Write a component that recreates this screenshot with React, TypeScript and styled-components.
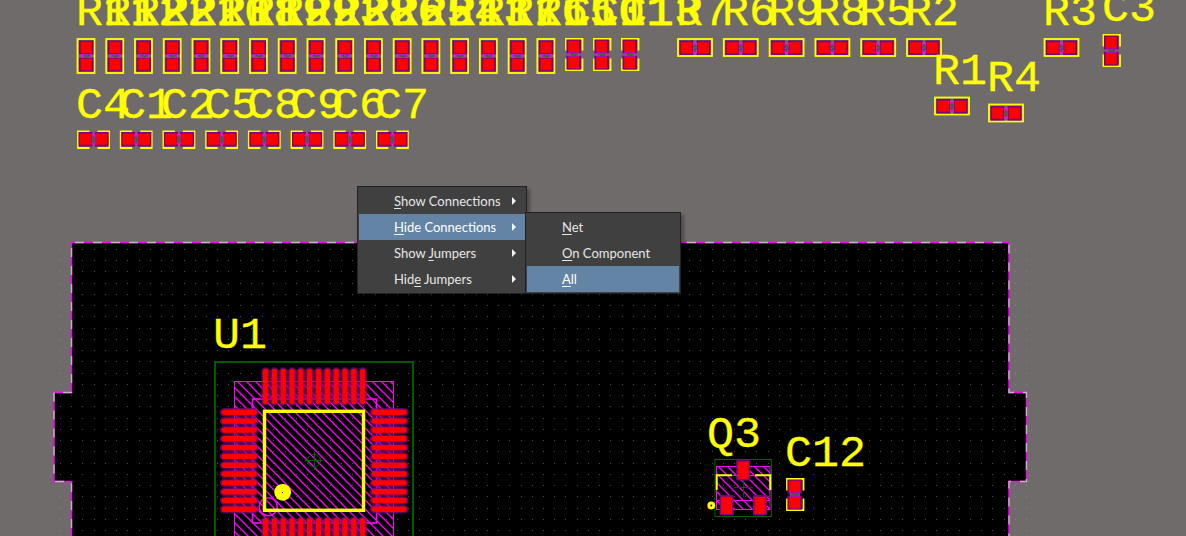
import React from "react";
import styled, { createGlobalStyle } from "styled-components";

const GlobalStyle = createGlobalStyle`
  html, body, #root { margin: 0; height: 100%; }
  body { background: #6f6b6a; overflow: hidden; }
`;

const YELLOW = "#ffff00";
const MAGENTA = "#ff00ff";
const PAD_RIM = "#800080";
const RED = "#ff0000";

const Workspace = styled.main`
  position: relative;
  width: 100%;
  height: 100%;
  overflow: hidden;
  background: #6f6b6a;
`;

const Canvas = styled.svg`
  display: block;
  width: 100%;
  height: 100%;
`;

const Designator = styled.text`
  font-family: "Liberation Mono", monospace;
  font-size: 45px;
  fill: ${YELLOW};
  stroke: ${YELLOW};
  stroke-width: 0.3px;
  stroke-linejoin: round;
`;

const MenuPanel = styled.div<{ $left: number; $top: number; $width: number }>`
  position: absolute;
  left: ${(p) => p.$left}px;
  top: ${(p) => p.$top}px;
  width: ${(p) => p.$width}px;
  box-sizing: border-box;
  display: flex;
  flex-direction: column;
  padding: 1px;
  border: 1px solid #222222;
  background: #404040;
  box-shadow: 3px 3px 3px rgba(0, 0, 0, 0.3);
`;

const MenuItem = styled.button<{ $active?: boolean }>`
  display: flex;
  align-items: center;
  justify-content: space-between;
  height: 26px;
  padding: 0 9px 0 35px;
  border: 0;
  background: ${(p) => (p.$active ? "#6384a4" : "transparent")};
  color: ${(p) => (p.$active ? "#ffffff" : "#e6e6e6")};
  font: 13px/26px Lato, "Noto Sans", sans-serif;
  text-align: left;
  white-space: nowrap;
`;

const Mnemonic = styled.span`
  text-decoration: underline;
  text-decoration-thickness: 1px;
  text-underline-offset: 2px;
`;

const Arrow = styled.svg`
  width: 4px;
  height: 8px;
  fill: #f4f4f4;
`;

type Item = { label: string; key: number; submenu?: boolean; active?: boolean };

const mainItems: Item[] = [
  { label: "Show Connections", key: 0, submenu: true },
  { label: "Hide Connections", key: 0, submenu: true, active: true },
  { label: "Show Jumpers", key: 5, submenu: true },
  { label: "Hide Jumpers", key: 3, submenu: true },
];

const subItems: Item[] = [
  { label: "Net", key: 0 },
  { label: "On Component", key: 0 },
  { label: "All", key: 0, active: true },
];

function Menu(props: { name: string; items: Item[]; left: number; top: number; width: number }) {
  return (
    <MenuPanel role="menu" aria-label={props.name} $left={props.left} $top={props.top} $width={props.width}>
      {props.items.map((item) => (
        <MenuItem
          key={item.label}
          type="button"
          role="menuitem"
          aria-haspopup={item.submenu ? "menu" : undefined}
          $active={item.active}
        >
          <span>
            {item.label.slice(0, item.key)}
            <Mnemonic>{item.label[item.key]}</Mnemonic>
            {item.label.slice(item.key + 1)}
          </span>
          {item.submenu && (
            <Arrow viewBox="0 0 4 8" aria-hidden="true">
              <path d="M0 0L4 4L0 8Z" />
            </Arrow>
          )}
        </MenuItem>
      ))}
    </MenuPanel>
  );
}

type Kind = "R" | "C";
type PartSpec = { kind: Kind; name: string; x: number; y: number; flat?: boolean; base: number };

const stackedNames = [
  "R11", "R12", "R22", "R21", "R20", "R18", "R19", "R29", "R23",
  "R28", "R26", "R25", "R24", "R13", "R17", "R16", "R15",
];

const parts: PartSpec[] = [
  ...stackedNames.map((name, i): PartSpec => ({ kind: "R", name, x: 76.5 + i * 28.74, y: 38, base: 25 })),
  ...["C10", "C11", "C13"].map((name, i): PartSpec => ({ kind: "C", name, x: 565 + i * 28, y: 38, base: 25 })),
  ...["R7", "R6", "R9", "R8", "R5", "R2"].map(
    (name, i): PartSpec => ({ kind: "R", name, x: 677 + i * 45.8, y: 38, flat: true, base: 25 }),
  ),
  ...["C4", "C1", "C2", "C5", "C8", "C9", "C6", "C7"].map(
    (name, i): PartSpec => ({ kind: "C", name, x: 77 + i * 42.7, y: 130.5, flat: true, base: 118 }),
  ),
  { kind: "R", name: "R1", x: 934, y: 96.5, flat: true, base: 84 },
  { kind: "R", name: "R4", x: 988, y: 103.5, flat: true, base: 91 },
  { kind: "R", name: "R3", x: 1043.5, y: 38, flat: true, base: 25 },
  { kind: "C", name: "C3", x: 1102.5, y: 34, base: 21 },
  { kind: "C", name: "C12", x: 786, y: 478, base: 466 },
];

function ChipBody({ kind }: { kind: Kind }) {
  const resistor = kind === "R";
  const left = resistor ? 3 : 2;
  const tops = resistor ? [2.5, 19.5] : [1.5, 17.7];
  const mid = resistor ? 18 : 16.6;
  return (
    <>
      {resistor ? (
        <rect x="1" y="1" width="17" height="34" fill="none" stroke={YELLOW} strokeWidth="1.8" />
      ) : (
        <path d="M1 12.5V1H17.5V12.5M1 20.5V32H17.5V20.5" fill="none" stroke={YELLOW} strokeWidth="1.8" />
      )}
      {tops.map((top) => (
        <g key={top}>
          <rect x={left - 0.5} y={top} width="14.5" height="14" fill={PAD_RIM} />
          <rect x={left + 1.2} y={top + 1.3} width="11" height="11.3" fill={RED} />
        </g>
      ))}
      <rect x={left + 1.5} y={mid - 2} width="10.5" height="4" fill={MAGENTA} fillOpacity="0.85" />
      <path
        d={`M${left + 4} ${mid - 1}h3m1 0h2M${left + 3} ${mid}h3m1 0h4M${left + 5} ${mid + 1}h4`}
        stroke="#207020"
        strokeWidth="1.2"
      />
    </>
  );
}

function Chip({ part }: { part: PartSpec }) {
  const place = part.flat ? `matrix(0 1 1 0 ${part.x} ${part.y})` : `translate(${part.x} ${part.y})`;
  return (
    <g transform={place}>
      <ChipBody kind={part.kind} />
    </g>
  );
}

const range = (n: number) => Array.from({ length: n }, (_, i) => i);

const gridPath = range(26)
  .map((r) =>
    range(87)
      .map((c) => `M${Math.round(60 + c * 11.233)} ${Math.round(249 + r * 11.24) + 0.5}h1`)
      .join(""),
  )
  .join("");

const OUTLINE = "M71.5 600V481.5H54V392.5H71.5V242.5H1009V392.5H1026.5V481.5H1009V600";

function Pin({ x, y, upright }: { x: number; y: number; upright?: boolean }) {
  const d = `M${x} ${y}${upright ? "v30" : "h30"}`;
  return (
    <g strokeLinecap="round" fill="none">
      <path d={d} stroke={PAD_RIM} strokeOpacity="0.7" strokeWidth="8.6" />
      <path d={d} stroke={RED} strokeWidth="5.4" />
    </g>
  );
}

function QuadPackage() {
  return (
    <g>
      <rect x="215" y="362" width="198" height="198" fill="none" stroke="#007000" strokeWidth="1.6" />
      <rect x="234.5" y="381.5" width="159" height="159" fill="url(#hatch)" stroke={MAGENTA} />
      <rect x="252.5" y="399" width="124" height="124" fill="none" stroke={MAGENTA} strokeWidth="1.6" />
      {range(12).map((i) => (
        <g key={i}>
          <Pin upright x={265.6 + i * 8.82} y={371.5} />
          <Pin upright x={265.6 + i * 8.82} y={520.8} />
          <Pin x={224.2} y={412.3 + i * 8.82} />
          <Pin x={374.2} y={412.3 + i * 8.82} />
        </g>
      ))}
      <circle cx="268.3" cy="506.7" r="9" fill="none" stroke={MAGENTA} strokeWidth="1.5" />
      <rect x="264.5" y="411.3" width="99" height="99" fill="none" stroke={YELLOW} strokeWidth="3.4" />
      <circle cx="282.7" cy="492.3" r="8.4" fill={YELLOW} />
      <rect x="282" y="492" width="1" height="1" fill="#333300" />
      <g fill="none" stroke="#006000">
        <circle cx="314" cy="460.7" r="6.5" />
        <path d="M305 460.5H323M314.5 452V470" />
      </g>
    </g>
  );
}

function Transistor() {
  return (
    <g fill="none">
      <rect x="715" y="459.5" width="56.5" height="57" stroke="#006400" />
      <rect x="716.5" y="466.5" width="53.5" height="43" fill="url(#hatch)" stroke={MAGENTA} />
      <path d="M716.5 475.5H770M716.5 500.5H770" stroke={MAGENTA} />
      <path d="M734 487.5H753M743.5 478V497" stroke="#005000" />
      <path d="M716.7 490V475.3H732M755 475.3H770.3V490" stroke={YELLOW} strokeWidth="2" />
      <g fill={RED} stroke={PAD_RIM} strokeWidth="1.6">
        <rect x="737" y="461" width="12.4" height="18.6" />
        <rect x="720.4" y="496" width="12.4" height="18.6" />
        <rect x="753.8" y="496" width="12.4" height="18.6" />
      </g>
      <circle cx="711.3" cy="505.5" r="2.4" stroke={YELLOW} strokeWidth="3" />
    </g>
  );
}

export default function App() {
  return (
    <Workspace>
      <GlobalStyle />
      <Canvas role="img" aria-label="Circuit board layout">
        <defs>
          <pattern id="hatch" width="9" height="9" patternUnits="userSpaceOnUse">
            <path d="M-1 -1L10 10M-1 8L1 10M8 -1L10 1" stroke={MAGENTA} strokeWidth="1.3" />
          </pattern>
        </defs>
        <path d={OUTLINE} fill="#000000" />
        <path d={gridPath} stroke="#999999" strokeOpacity="0.5" shapeRendering="crispEdges" />
        <path d={OUTLINE} fill="none" stroke={MAGENTA} strokeWidth="1.4" />
        <path d={OUTLINE} fill="none" stroke="#c0b8c0" strokeWidth="1.4" strokeDasharray="9 9" />
        <QuadPackage />
        <Transistor />
        {parts.map((part) => (
          <Chip key={part.name} part={part} />
        ))}
        {parts.map((part) => (
          <Designator key={part.name} x={Math.round(part.x - 1)} y={part.base}>
            {part.name}
          </Designator>
        ))}
        <Designator x={213} y={348}>U1</Designator>
        <Designator x={707} y={447}>Q3</Designator>
      </Canvas>
      <Menu name="Connections" items={mainItems} left={357} top={186} width={170} />
      <Menu name="Hide Connections" items={subItems} left={525} top={212} width={156} />
    </Workspace>
  );
}
